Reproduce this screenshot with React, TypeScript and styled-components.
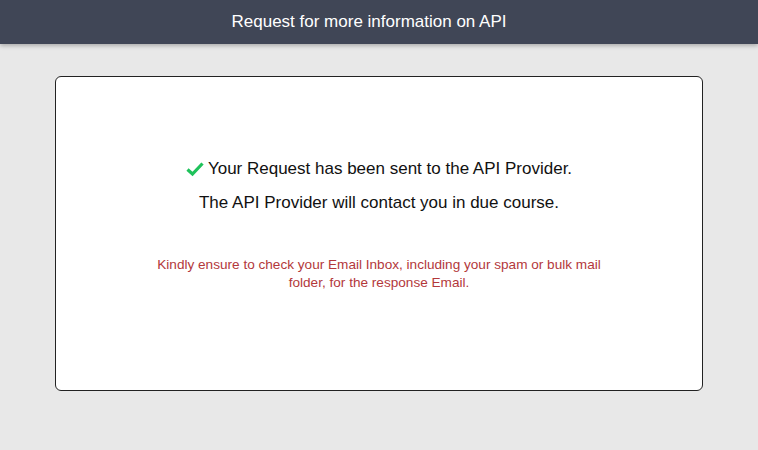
import styled, { createGlobalStyle } from 'styled-components';

const GlobalStyle = createGlobalStyle`
  html, body {
    margin: 0;
    padding: 0;
    background: #e8e8e8;
    font-family: "Liberation Sans", Arial, sans-serif;
  }
`;

const Page = styled.div`
  min-height: 450px;
  background: #e8e8e8;
`;

const Header = styled.header`
  height: 44px;
  background: #404656;
  color: #ffffff;
  display: flex;
  align-items: center;
  justify-content: center;
  padding-right: 20px;
  font-size: 17px;
  box-shadow: 0 2px 4px rgba(0, 0, 0, 0.25);
`;

const Main = styled.main`
  padding: 32px 55px 0;
`;

const Card = styled.section`
  height: 315px;
  background: #ffffff;
  border: 1px solid #222222;
  border-radius: 6px;
  display: flex;
  flex-direction: column;
  align-items: center;
  padding-top: 82px;
  box-sizing: border-box;
`;

const Line = styled.p`
  margin: 0 0 14px;
  font-size: 17px;
  line-height: 20px;
  color: #111111;
  display: flex;
  align-items: center;
  gap: 4px;
`;

const Note = styled.p`
  margin: 29px 0 0;
  width: 470px;
  font-size: 13.6px;
  line-height: 18px;
  color: #b3383b;
  text-align: center;
`;

const Check = () => (
  <svg width="18" height="16" viewBox="0 0 18 16">
    <path d="M1.5 8.5 L6.5 13 L16.5 2.5" fill="none" stroke="#1fc25b" strokeWidth="3.2" />
  </svg>
);

export default function App() {
  return (
    <Page>
      <GlobalStyle />
      <Header>Request for more information on API</Header>
      <Main>
        <Card>
          <Line>
            <Check />
            Your Request has been sent to the API Provider.
          </Line>
          <Line>The API Provider will contact you in due course.</Line>
          <Note>
            Kindly ensure to check your Email Inbox, including your spam or bulk mail folder, for the
            response Email.
          </Note>
        </Card>
      </Main>
    </Page>
  );
}
